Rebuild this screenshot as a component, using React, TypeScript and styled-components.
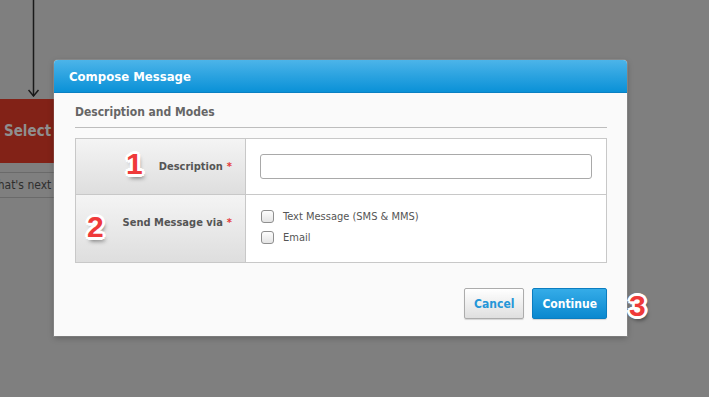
import styled, { createGlobalStyle } from 'styled-components';

const GlobalStyle = createGlobalStyle`
  html, body {
    margin: 0;
    padding: 0;
    background: #7f7f7f;
  }
  body {
    font-family: 'DejaVu Sans Condensed', 'DejaVu Sans', Tahoma, sans-serif;
  }
`;

const Page = styled.div`
  position: relative;
  width: 709px;
  height: 397px;
  overflow: hidden;
  background: #7f7f7f;
`;

const Flow = styled.div`
  display: flex;
  flex-direction: column;
  width: 160px;
`;

const Connector = styled.svg`
  display: block;
  margin-left: 28px;
`;

const StepBox = styled.div`
  height: 64px;
  margin-top: 2px;
  background: #822217;
  display: flex;
  align-items: center;
  padding-left: 4px;
  color: #8f8f8f;
  font-weight: bold;
  font-size: 15px;
  white-space: nowrap;
`;

const NextBox = styled.div`
  margin-top: 9px;
  height: 24px;
  border-top: 1px solid #6a6a6a;
  border-bottom: 1px solid #6a6a6a;
  display: flex;
  align-items: center;
  color: #2e2e2e;
  font-size: 12px;
  white-space: nowrap;
  overflow: hidden;
  text-indent: -13px;
`;

const Modal = styled.div`
  position: absolute;
  left: 54px;
  top: 60px;
  width: 573px;
  height: 276px;
  display: flex;
  flex-direction: column;
  background: #fafafa;
  border-radius: 4px 4px 0 0;
  box-shadow: 0 0 0 1px rgba(255, 255, 255, 0.12), 0 2px 6px rgba(0, 0, 0, 0.25);
`;

const Header = styled.div`
  height: 32px;
  border-radius: 4px 4px 0 0;
  background: linear-gradient(#4cb4e9, #0a91d7);
  border-bottom: 1px solid #0a80c2;
  display: flex;
  align-items: center;
  padding-left: 15px;
  color: #fff;
  font-weight: bold;
  font-size: 13px;
`;

const Body = styled.div`
  flex: 1;
  display: flex;
  flex-direction: column;
  padding: 0 20px 17px 21px;
`;

const SectionTitle = styled.div`
  padding: 11px 0 7px;
  line-height: 16px;
  border-bottom: 1px solid #bdbdbd;
  color: #666;
  font-weight: bold;
  font-size: 12px;
`;

const Table = styled.div`
  margin-top: 10px;
  display: grid;
  grid-template-columns: 170px 1fr;
  border: 1px solid #c8c8c8;
`;

const LabelCell = styled.div<{ $height: number; $top?: boolean; $border?: boolean }>`
  height: ${({ $height }) => $height}px;
  box-sizing: border-box;
  display: flex;
  justify-content: flex-end;
  align-items: ${({ $top }) => ($top ? 'flex-start' : 'center')};
  padding: ${({ $top }) => ($top ? '21px 13px 0 0' : '0 13px 0 0')};
  background: linear-gradient(#f4f4f4, #dedede);
  border-right: 1px solid #c8c8c8;
  border-top: ${({ $border }) => ($border ? '1px solid #c8c8c8' : 'none')};
  color: #555;
  font-weight: bold;
  font-size: 11px;
`;

const ValueCell = styled.div<{ $border?: boolean }>`
  box-sizing: border-box;
  background: #fff;
  display: flex;
  flex-direction: column;
  justify-content: center;
  padding: 0 14px;
  border-top: ${({ $border }) => ($border ? '1px solid #c8c8c8' : 'none')};
`;

const Required = styled.span`
  color: #e53b3b;
  margin-left: 4px;
`;

const TextInput = styled.input`
  box-sizing: border-box;
  width: 332px;
  height: 25px;
  border: 1px solid #a9a9a9;
  border-radius: 3px;
  background: #fff;
  outline: none;
`;

const Options = styled.div`
  display: flex;
  flex-direction: column;
  gap: 6px;
  margin-top: -4px;
`;

const Option = styled.label`
  display: flex;
  align-items: center;
  gap: 9px;
  color: #555;
  font-size: 11px;
  line-height: 15px;
`;

const Check = styled.input`
  appearance: none;
  margin: 0 0 0 1px;
  width: 13px;
  height: 13px;
  border: 1px solid #8f8f8f;
  border-radius: 3px;
  background: linear-gradient(#fdfdfd, #e4e4e4);
`;

const Footer = styled.div`
  margin-top: auto;
  display: flex;
  justify-content: flex-end;
  gap: 8px;
`;

const Button = styled.button<{ $primary?: boolean }>`
  height: 31px;
  padding: 0 9px;
  border-radius: 2px;
  border: 1px solid ${({ $primary }) => ($primary ? '#0b7dc0' : '#acacac')};
  background: ${({ $primary }) =>
    $primary
      ? 'linear-gradient(#35ace8, #0a88cf)'
      : 'linear-gradient(#ffffff, #dfdfdf)'};
  color: ${({ $primary }) => ($primary ? '#fff' : '#2596d8')};
  font-family: 'DejaVu Sans Condensed', 'DejaVu Sans', sans-serif;
  font-weight: bold;
  font-size: 12px;
  box-shadow: 0 1px 1px rgba(0, 0, 0, 0.15);
`;

const Marker = styled.span<{ $x: number; $y: number }>`
  position: absolute;
  left: ${({ $x }) => $x}px;
  top: ${({ $y }) => $y}px;
  font-family: 'Liberation Sans', Arial, sans-serif;
  font-weight: bold;
  font-size: 30px;
  line-height: 1;
  color: #ef3a3a;
  text-shadow:
    2px 0 0 #fff, -2px 0 0 #fff, 0 2px 0 #fff, 0 -2px 0 #fff,
    2px 2px 0 #fff, -2px 2px 0 #fff, 2px -2px 0 #fff, -2px -2px 0 #fff,
    3px 0 0 #fff, -3px 0 0 #fff, 0 3px 0 #fff, 0 -3px 0 #fff,
    2px 4px 4px rgba(0, 0, 0, 0.55);
`;

export default function App() {
  return (
    <Page>
      <GlobalStyle />
      <Flow>
        <Connector width="12" height="97" viewBox="0 0 12 97">
          <line x1="5.5" y1="0" x2="5.5" y2="96" stroke="#1a1a1a" strokeWidth="1.5" />
          <polyline points="0.5,90 5.5,96 10.5,90" fill="none" stroke="#1a1a1a" strokeWidth="1.5" />
        </Connector>
        <StepBox>Select Message</StepBox>
        <NextBox>What's next</NextBox>
      </Flow>

      <Modal>
        <Header>Compose Message</Header>
        <Body>
          <SectionTitle>Description and Modes</SectionTitle>
          <Table>
            <LabelCell $height={55}>
              Description<Required>*</Required>
            </LabelCell>
            <ValueCell>
              <TextInput type="text" />
            </ValueCell>
            <LabelCell $height={68} $top $border>
              Send Message via<Required>*</Required>
            </LabelCell>
            <ValueCell $border>
              <Options>
                <Option>
                  <Check type="checkbox" />
                  Text Message (SMS &amp; MMS)
                </Option>
                <Option>
                  <Check type="checkbox" />
                  Email
                </Option>
              </Options>
            </ValueCell>
          </Table>
          <Footer>
            <Button>Cancel</Button>
            <Button $primary>Continue</Button>
          </Footer>
        </Body>
      </Modal>

      <Marker $x={126} $y={149}>1</Marker>
      <Marker $x={87} $y={212}>2</Marker>
      <Marker $x={629} $y={291}>3</Marker>
    </Page>
  );
}
